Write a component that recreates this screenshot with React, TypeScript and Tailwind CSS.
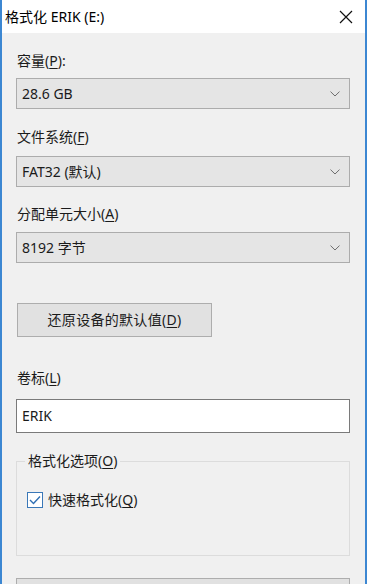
import React from "react";

const font = { fontFamily: '"Noto Sans", "Noto Sans CJK SC", sans-serif' };

function Chevron() {
  return (
    <svg width="10" height="6" viewBox="0 0 10 6" className="shrink-0">
      <polyline points="0.5,0.6 5,5 9.5,0.6" fill="none" stroke="#6d6d6d" strokeWidth="1" />
    </svg>
  );
}

function Select({ value, className }: { value: string; className: string }) {
  return (
    <div
      className={`h-[31px] w-[334px] flex items-center justify-between pl-[5px] pr-[9px] bg-[#e5e5e5] border border-[#acacac] text-[14px] text-[#1b1b1b] ${className}`}
    >
      <span className="leading-[20px]">{value}</span>
      <Chevron />
    </div>
  );
}

function Label({ children, className }: { children: React.ReactNode; className: string }) {
  return <div className={`h-[20px] leading-[20px] text-[14px] text-[#1b1b1b] pl-[1px] ${className}`}>{children}</div>;
}

export default function App() {
  return (
    <div
      style={font}
      className="w-[367px] h-[584px] overflow-hidden bg-[#f0f0f0] border-l-2 border-r-2 border-[#3c87d2] flex flex-col"
    >
      <div className="h-[33px] bg-white flex items-center justify-between pl-[3px] pr-[12px] shrink-0">
        <span className="text-[14px] leading-[20px] text-black">格式化 ERIK (E:)</span>
        <svg width="14" height="14" viewBox="0 0 14 14">
          <path d="M1 1 L13 13 M13 1 L1 13" stroke="#111" strokeWidth="1.2" fill="none" />
        </svg>
      </div>
      <div className="flex flex-col pl-[14px]">
        <Label className="mt-[18px]">
          容量(<span className="underline underline-offset-2">P</span>):
        </Label>
        <Select value="28.6 GB" className="mt-[7px]" />
        <Label className="mt-[18px]">
          文件系统(<span className="underline underline-offset-2">F</span>)
        </Label>
        <Select value="FAT32 (默认)" className="mt-[9px]" />
        <Label className="mt-[17px]">
          分配单元大小(<span className="underline underline-offset-2">A</span>)
        </Label>
        <Select value="8192 字节" className="mt-[8px]" />
        <div className="mt-[40px] ml-[1px] h-[34px] w-[195px] bg-[#e1e1e1] border border-[#adadad] flex items-center justify-center text-[14px] text-[#1b1b1b]">
          <span className="leading-[20px] tracking-[0.3px]">
            还原设备的默认值(<span className="underline underline-offset-2">D</span>)
          </span>
        </div>
        <Label className="mt-[31px]">
          卷标(<span className="underline underline-offset-2">L</span>)
        </Label>
        <div className="mt-[11px] h-[34px] w-[334px] bg-white border border-[#7a7a7a] flex items-center pl-[5px] text-[14px] text-[#1b1b1b]">
          <span className="leading-[20px]">ERIK</span>
        </div>
        <div className="relative mt-[28px] h-[95px] w-[334px] border border-[#dcdcdc]">
          <div className="absolute left-[8px] top-[-11px] px-[3px] bg-[#f0f0f0] text-[14px] leading-[20px] text-[#1b1b1b]">
            格式化选项(<span className="underline underline-offset-2">O</span>)
          </div>
          <div className="mt-[28px] ml-[10px] flex items-center gap-[5px]">
            <div className="w-[16px] h-[16px] border border-[#3a78b8] bg-white flex items-center justify-center">
              <svg width="12" height="10" viewBox="0 0 12 10">
                <polyline points="1,5 4.5,8.5 11,1.5" fill="none" stroke="#2f6fb3" strokeWidth="1.4" />
              </svg>
            </div>
            <span className="text-[14px] leading-[20px] text-[#1b1b1b]">
              快速格式化(<span className="underline underline-offset-2">Q</span>)
            </span>
          </div>
        </div>
        <div className="mt-[22px] h-[34px] w-[334px] bg-[#e1e1e1] border border-[#adadad]" />
      </div>
    </div>
  );
}
